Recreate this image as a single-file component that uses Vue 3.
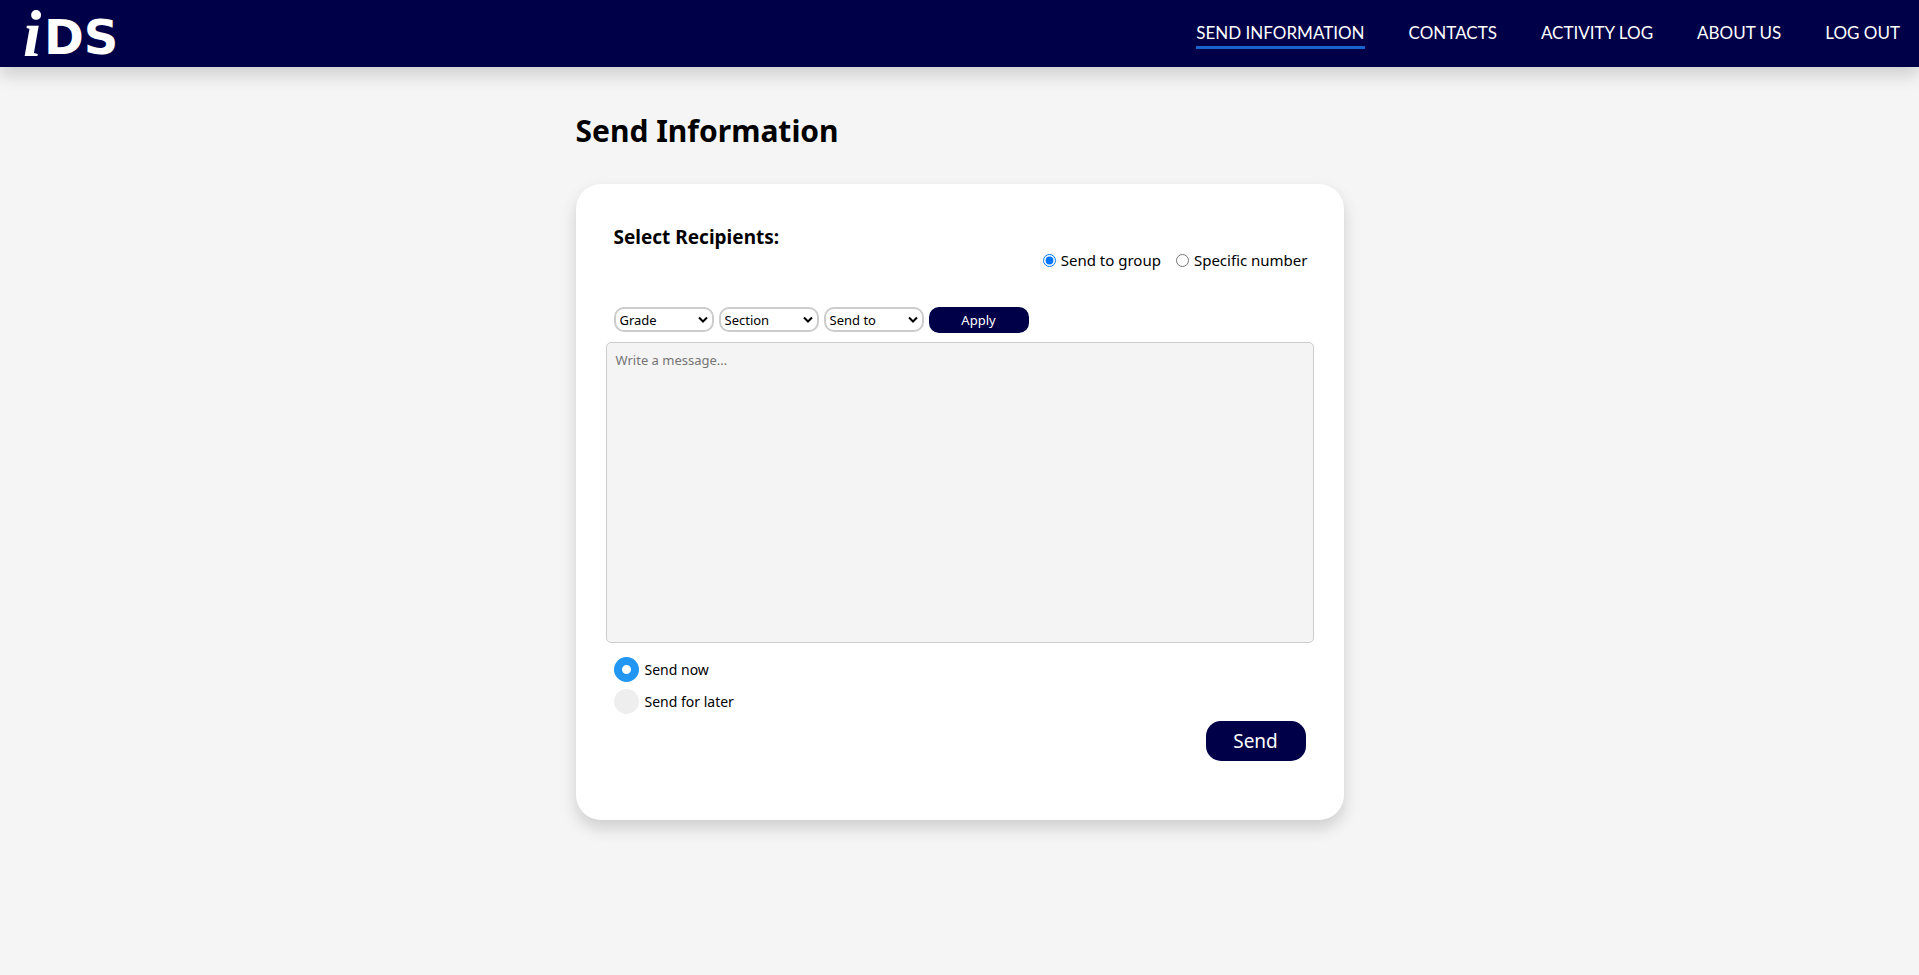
<script setup>
import { ref } from 'vue'

const links = ['Send Information', 'Contacts', 'Activity Log', 'About Us', 'Log Out']
const filters = ['Grade', 'Section', 'Send to']
const target = ref('group')
const schedule = ref('now')
const message = ref('')
</script>

<template>
  <header class="bar">
    <a class="brand" href="#" aria-label="iDS">
      <svg class="logo" width="110" height="67" viewBox="0 0 110 67">
        <text class="logo-i" x="3" y="56">i</text>
        <text class="logo-ds" x="24" y="54">DS</text>
      </svg>
    </a>
    <nav class="menu">
      <a v-for="(link, i) in links" :key="link" href="#" class="link" :class="{ active: i === 0 }">{{ link }}</a>
    </nav>
  </header>

  <main class="page">
    <h1 class="title">Send Information</h1>
    <form class="card" @submit.prevent>
      <h2 class="subtitle">Select Recipients:</h2>
      <div class="targets">
        <label class="target"><input v-model="target" type="radio" name="target" value="group" />Send to group</label>
        <label class="target"><input v-model="target" type="radio" name="target" value="number" />Specific number</label>
      </div>
      <div class="filters">
        <div v-for="name in filters" :key="name" class="filter">
          <select class="select" :aria-label="name">
            <option>{{ name }}</option>
          </select>
          <svg class="chevron" width="10" height="8" viewBox="0 0 10 8"><path d="M1 1.5 5 5.5 9 1.5" /></svg>
        </div>
        <button type="button" class="apply">Apply</button>
      </div>
      <textarea v-model="message" class="message" aria-label="Message" placeholder="Write a message..."></textarea>
      <div class="times">
        <label class="time"><input v-model="schedule" class="dot" type="radio" name="time" value="now" />Send now</label>
        <label class="time"><input v-model="schedule" class="dot" type="radio" name="time" value="later" />Send for later</label>
      </div>
      <button type="submit" class="send">Send</button>
    </form>
  </main>
</template>

<style>
body {
  background: #f5f5f5;
}
</style>

<style scoped>
* {
  box-sizing: border-box;
}
.bar {
  display: flex;
  align-items: center;
  justify-content: space-between;
  height: 67px;
  padding: 0 19px 0 20px;
  background: #000048;
  box-shadow: 0 8px 16px rgba(0, 0, 0, 0.16);
}
.brand,
.logo {
  display: block;
}
.logo {
  fill: #fff;
  overflow: visible;
}
.logo-i {
  font: italic bold 66px "Liberation Serif", serif;
}
.logo-ds {
  font: bold 48px "DejaVu Sans", sans-serif;
}
.menu {
  display: flex;
  gap: 44px;
  padding-top: 4px;
}
.link {
  padding-bottom: 3px;
  border-bottom: 3px solid transparent;
  color: #fff;
  font: 17px/20px Lato, sans-serif;
  text-decoration: none;
  text-transform: uppercase;
}
.link.active {
  border-color: #1a62cc;
}
.page {
  max-width: 768px;
  margin: 0 auto;
  padding: 42px 0;
  color: #000;
  font-family: "Noto Sans", sans-serif;
}
.title {
  margin: 0 0 32px;
  font-size: 30px;
  line-height: 43px;
}
.card {
  display: flex;
  flex-direction: column;
  padding: 40px 30px 59px;
  border-radius: 25px;
  background: #fff;
  box-shadow: 0 8px 16px rgba(0, 0, 0, 0.16);
}
.subtitle {
  margin: 0 8px;
  font-size: 19px;
  line-height: 26px;
}
.targets {
  display: flex;
  justify-content: flex-end;
  gap: 15px;
  padding-right: 6px;
}
.target {
  display: flex;
  align-items: center;
  gap: 5px;
  font-size: 15px;
  line-height: 20px;
}
.target input {
  width: 13px;
  height: 13px;
  margin: 0;
}
.filters {
  display: flex;
  gap: 5px;
  margin: 37px 8px 9px;
}
.filter {
  position: relative;
  width: 100px;
}
.select {
  display: block;
  width: 100%;
  height: 25px;
  padding: 0 4px;
  border: 2px solid #ccc;
  border-radius: 10px;
  background: #fff;
  color: #000;
  font: 13px "Noto Sans", sans-serif;
  appearance: none;
}
.chevron {
  position: absolute;
  top: 9px;
  right: 6px;
  fill: none;
  stroke: #000;
  stroke-width: 2;
  pointer-events: none;
}
.apply {
  width: 100px;
  height: 26px;
  border: 0;
  border-radius: 10px;
  background: #000048;
  color: #fff;
  font: 13px "Noto Sans", sans-serif;
}
.message {
  display: block;
  width: 100%;
  height: 301px;
  padding: 8px 9px;
  border: 1px solid #ccc;
  border-radius: 5px;
  background: #f4f4f4;
  font: 13px/19px "Noto Sans", sans-serif;
  resize: none;
}
.message::placeholder {
  color: #757575;
}
.times {
  display: flex;
  flex-direction: column;
  gap: 7px;
  margin: 14px 8px 7px;
}
.time {
  display: flex;
  align-items: center;
  align-self: flex-start;
  gap: 6px;
  font-size: 14px;
  line-height: 25px;
}
.dot {
  width: 25px;
  height: 25px;
  margin: 0;
  border-radius: 50%;
  background: #eee;
  appearance: none;
}
.dot:checked {
  border: 8px solid #2196f3;
  background: #fff;
}
.send {
  align-self: flex-end;
  width: 100px;
  height: 40px;
  margin-right: 8px;
  border: 0;
  border-radius: 15px;
  background: #000048;
  color: #fff;
  font: 19px "Noto Sans", sans-serif;
}
</style>
